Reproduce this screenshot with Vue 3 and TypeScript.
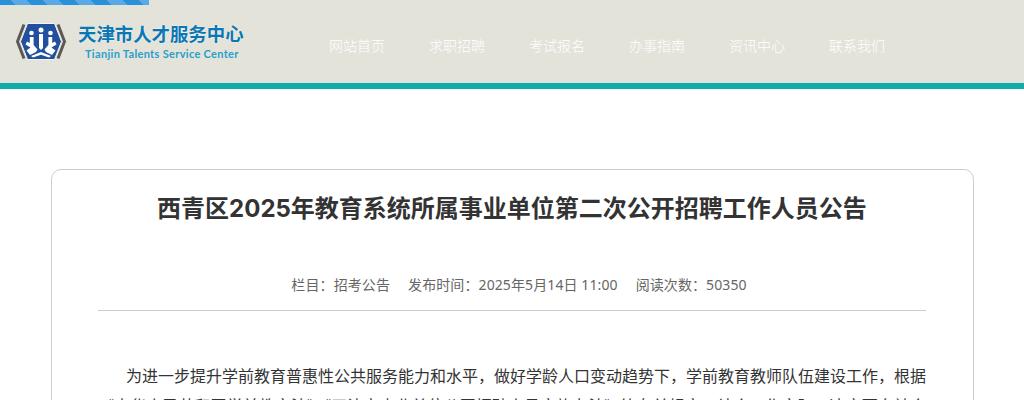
<script setup lang="ts">
const navItems: string[] = ['网站首页', '求职招聘', '考试报名', '办事指南', '资讯中心', '联系我们']
</script>

<template>
  <div class="page">
    <header class="header">
      <div class="stripe"></div>
      <div class="header-row">
        <div class="brand">
          <svg class="logo" width="52" height="44" viewBox="0 0 52 44">
            <path d="M9 4.5 L2.5 21.5 L9 38.5" fill="none" stroke="#5d5a55" stroke-width="3" />
            <path d="M43 4.5 L49.5 21.5 L43 38.5" fill="none" stroke="#5d5a55" stroke-width="3" />
            <path d="M12.5 3.5 H39.5 L46.5 21.5 L39.5 39.5 H12.5 L5.5 21.5 Z" fill="#22509f" stroke="#f4f4f0" stroke-width="1" />
            <g fill="#ffffff">
              <circle cx="26" cy="10" r="2.5" />
              <circle cx="16.5" cy="13" r="2.3" />
              <circle cx="35.5" cy="13" r="2.3" />
              <path d="M24 14 H28 V28 L26 30 L24 28 Z" />
              <path d="M14.8 17 H18.6 V25 L22.5 29.5 L21 32 L15 35 L11.5 30.5 L15.5 27.5 L10.5 24.5 L12 21.5 L14.8 23 Z" />
              <path d="M37.2 17 H33.4 V25 L29.5 29.5 L31 32 L37 35 L40.5 30.5 L36.5 27.5 L41.5 24.5 L40 21.5 L37.2 23 Z" />
              <path d="M16 36 L26 32 L36 36 L34 37.5 L26 34.8 L18 37.5 Z" />
            </g>
          </svg>
          <div class="brand-text">
            <div class="brand-cn">天津市人才服务中心</div>
            <div class="brand-en">Tianjin Talents Service Center</div>
          </div>
        </div>
        <nav class="nav">
          <a v-for="item in navItems" :key="item" class="nav-item">{{ item }}</a>
        </nav>
      </div>
    </header>

    <main class="card">
      <h1 class="title">西青区2025年教育系统所属事业单位第二次公开招聘工作人员公告</h1>
      <div class="meta">
        <span>栏目：招考公告</span>
        <span>发布时间：2025年5月14日 11:00</span>
        <span>阅读次数：50350</span>
      </div>
      <p class="para">为进一步提升学前教育普惠性公共服务能力和水平，做好学龄人口变动趋势下，学前教育教师队伍建设工作，根据《中华人民共和国学前教育法》《天津市事业单位公开招聘人员实施办法》等有关规定，结合工作实际，决定面向社会公开招聘工作人员。</p>
    </main>
  </div>
</template>

<style>
html, body {
  margin: 0;
  overflow: hidden;
  background: #fff;
}
</style>

<style scoped>
.page {
  height: 400px;
  overflow: hidden;
  font-family: "Noto Sans", "Noto Sans CJK SC", sans-serif;
  background: #fff;
}
.header {
  height: 83px;
  background: #e3e3da;
  border-bottom: 6px solid #10acac;
}
.stripe {
  width: 149px;
  height: 5px;
  background: repeating-linear-gradient(45deg, #2a90d9 0 11.3px, #5aaae6 11.3px 22.6px);
}
.header-row {
  display: flex;
  align-items: flex-start;
}
.brand {
  display: flex;
  margin: 14px 0 0 15px;
  width: 314px;
}
.logo {
  display: block;
  margin-top: 1px;
  flex: none;
}
.brand-text {
  margin: 1px 0 0 11px;
  display: flex;
  flex-direction: column;
  align-items: flex-start;
}
.brand-cn {
  font-size: 18.4px;
  line-height: 28px;
  font-weight: 700;
  color: #0a78b4;
  white-space: nowrap;
  text-shadow: 0 0 2px rgba(255, 255, 255, 0.8);
}
.brand-en {
  margin: -1px 0 0 7px;
  font-family: Lato, sans-serif;
  font-size: 11px;
  line-height: 14px;
  font-weight: 700;
  letter-spacing: 0.32px;
  color: #2a9ecb;
  white-space: nowrap;
}
.nav {
  display: flex;
  gap: 44px;
  margin-top: 31px;
}
.nav-item {
  font-size: 14px;
  line-height: 20px;
  font-weight: 300;
  color: #fff;
  white-space: nowrap;
}
.card {
  box-sizing: border-box;
  width: 923px;
  margin: 80px 0 0 51px;
  padding: 19px 47px 40px 46px;
  border: 1px solid #ccc;
  border-radius: 10px;
  background: #fff;
}
.title {
  margin: 0;
  font-family: Inter, "Noto Sans CJK SC", sans-serif;
  font-size: 24px;
  line-height: 40px;
  font-weight: 700;
  color: #333;
  text-align: center;
}
.meta {
  display: flex;
  justify-content: center;
  gap: 18px;
  margin-top: 46px;
  padding: 0 0 15px 14px;
  border-bottom: 1px solid #ccc;
  font-size: 14px;
  line-height: 20px;
  letter-spacing: 0.1px;
  color: #666;
}
.para {
  margin: 50px 0 0;
  font-size: 16px;
  line-height: 30px;
  color: #333;
  text-indent: 28px;
  text-align: justify;
}
</style>
